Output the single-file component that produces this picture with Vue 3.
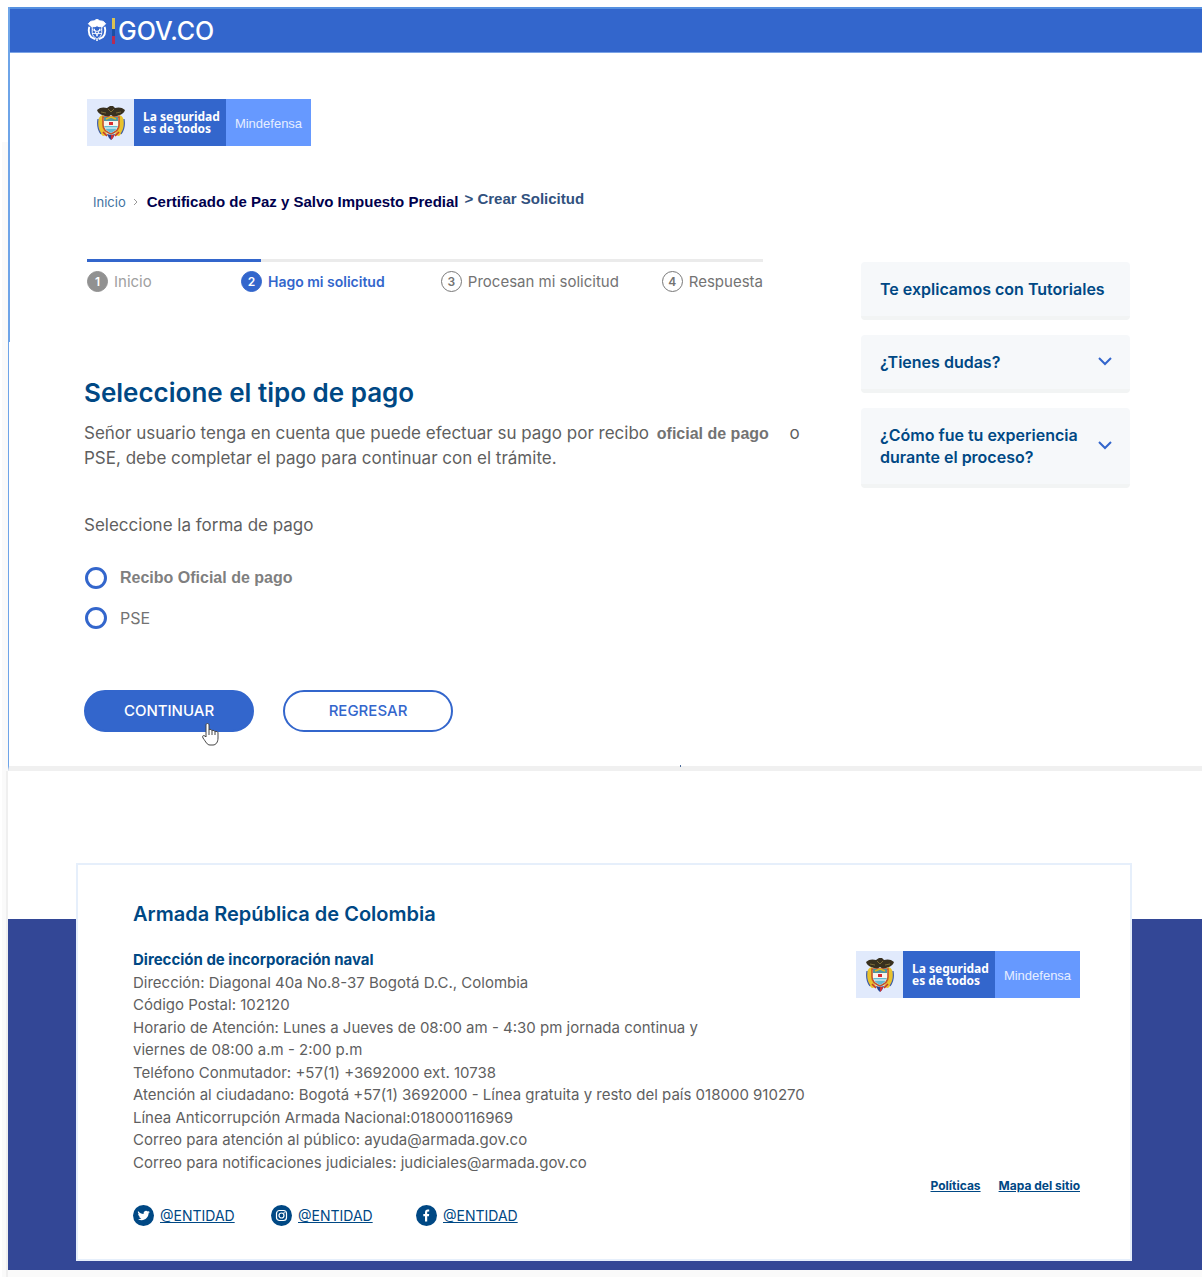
<script setup>
import { ref } from 'vue'

const payment = ref('')

const steps = [
  { label: 'Inicio', state: 'done' },
  { label: 'Hago mi solicitud', state: 'current' },
  { label: 'Procesan mi solicitud', state: 'next' },
  { label: 'Respuesta', state: 'next' },
]

const options = [
  { id: 'recibo', label: 'Recibo Oficial de pago', strong: true },
  { id: 'pse', label: 'PSE', strong: false },
]

const contact = [
  'Dirección: Diagonal 40a No.8-37 Bogotá D.C., Colombia',
  'Código Postal: 102120',
  'Horario de Atención: Lunes a Jueves de 08:00 am - 4:30 pm jornada continua y',
  'viernes de 08:00 a.m - 2:00 p.m',
  'Teléfono Conmutador: +57(1) +3692000 ext. 10738',
  'Atención al ciudadano: Bogotá +57(1) 3692000 - Línea gratuita y resto del país 018000 910270',
  'Línea Anticorrupción Armada Nacional:018000116969',
  'Correo para atención al público: ayuda@armada.gov.co',
  'Correo para notificaciones judiciales: judiciales@armada.gov.co',
]

const networks = ['twitter', 'instagram', 'facebook']
</script>

<template>
  <div class="page">
    <svg class="sprite" aria-hidden="true">
      <symbol id="arms" viewBox="0 0 30 34">
        <path d="M7 9C3 10 2 13 2 17c0 6 1 10 5 13l5-1C8 25 7 20 8 12z" fill="#e9c22c" />
        <path d="M23 9c4 1 5 4 5 8 0 6-1 10-5 13l-5-1c4-4 5-9 4-17z" fill="#e9c22c" />
        <path d="M2 13c-1 6 0 11 3 15M28 13c1 6 0 11-3 15" fill="none" stroke="#3f5da8" stroke-width="1.200" />
        <path d="M7 26l4 4M23 26l-4 4" stroke="#c8342c" stroke-width="1.600" />
        <path d="M1 4c3-3 7-3 10-2l3-2h3l2 2c3-1 7-1 10 2-1 3-3 4-5 5l-6 2-3-2-3 2-6-2C4 8 2 7 1 4z" fill="#38301f" />
        <path d="M5 6l5 1M25 6l-5 1M12 3l3 3 3-3" fill="none" stroke="#7c6b38" stroke-width="1" />
        <path d="M7 11h16v8c0 4-3 7-8 9-5-2-8-5-8-9z" fill="#f8f4ec" stroke="#c2542a" stroke-width="1.600" />
        <path d="M8 11h14v4H8z" fill="#4f97a0" />
        <path d="M10 13l5-2 5 2" fill="none" stroke="#e3b51c" stroke-width="1.600" />
        <path d="M13 16h4v3h-4z" fill="#d92d30" />
        <path d="M8 20h14c-1 3-3 5-7 7-4-2-6-4-7-7z" fill="#64bad2" />
        <path d="M9 22h12" stroke="#fff" stroke-width="1" />
        <path d="M11 28l4 1 4-1-2 4-2 2-2-2z" fill="#29428f" />
        <path d="M15 29l3 0-1 3-2 2z" fill="#cf3034" />
      </symbol>
      <symbol id="arms-line" viewBox="0 0 20 24">
        <g fill="none" stroke="#fff" stroke-linejoin="round">
          <path d="M1 5c2-3 4-3 6-3l3-2 3 2c2 0 4 0 6 3l-3 3-4 0-2-1-2 1-4 0z" fill="#fff" />
          <path d="M5 8v6c0 3 2 5 5 7 3-2 5-4 5-7V8" />
          <path d="M2 8c-1 4-1 8 2 11l4 2M18 8c1 4 1 8-2 11l-4 2" stroke-width="2" />
          <path d="M5 11l5 2 5-2M5 15h10M7 10l3 8 3-8M9 21l1 2 1-2" />
        </g>
      </symbol>
    </svg>

    <div class="screen">
      <header class="topbar">
        <a class="gov" href="#" aria-label="GOV.CO">
          <svg class="gov-arms"><use href="#arms-line" /></svg>
          <span class="flag"></span>
          <span class="gov-name">GOV.CO</span>
        </a>
      </header>

      <div class="body">
        <div class="entity">
          <span class="entity-arms"><svg><use href="#arms" /></svg></span>
          <strong class="entity-motto">La seguridad<br />es de todos</strong>
          <span class="entity-name">Mindefensa</span>
        </div>

        <nav class="crumbs" aria-label="Ruta">
          <a href="#">Inicio</a>
          <svg class="crumb-sep" viewBox="0 0 6 8"><path d="M1 1l3 3-3 3" /></svg>
          <span class="crumb-page">Certificado de Paz y Salvo Impuesto Predial</span>
          <span class="crumb-last">&gt; Crear Solicitud</span>
        </nav>

        <div class="columns">
          <main>
            <ol class="steps">
              <li v-for="(step, i) in steps" :key="step.label" :class="step.state">
                <span class="num">{{ i + 1 }}</span>{{ step.label }}
              </li>
            </ol>

            <h1>Seleccione el tipo de pago</h1>
            <p class="intro">
              Señor usuario tenga en cuenta que puede efectuar su pago por recibo
              <strong>oficial de pago</strong> o<br />
              PSE, debe completar el pago para continuar con el trámite.
            </p>

            <form @submit.prevent>
              <fieldset>
                <legend>Seleccione la forma de pago</legend>
                <label v-for="o in options" :key="o.id" :class="{ strong: o.strong }">
                  <input v-model="payment" type="radio" name="pago" :value="o.id" />
                  {{ o.label }}
                </label>
              </fieldset>
              <div class="actions">
                <button class="primary" type="submit">
                  CONTINUAR
                  <svg class="cursor" viewBox="0 0 18 23">
                    <path d="M5 2c0-2 3-2 3 0v5c0-1 3-1 3 1 0-1 3-1 3 1 0-1 3-1 3 1v5c0 4-2 7-5 7H9c-3 0-4-3-7-7-1-2 0-3 2-2l1 1z" />
                    <path d="M8 7v5M11 8v4M14 9v3" />
                  </svg>
                </button>
                <button class="secondary" type="button">REGRESAR</button>
              </div>
            </form>
          </main>

          <aside>
            <a class="help" href="#">Te explicamos con Tutoriales</a>
            <button class="help" type="button">
              ¿Tienes dudas?
              <svg viewBox="0 0 14 9"><path d="M1 1l6 6 6-6" /></svg>
            </button>
            <button class="help tall" type="button">
              <span>¿Cómo fue tu experiencia<br />durante el proceso?</span>
              <svg viewBox="0 0 14 9"><path d="M1 1l6 6 6-6" /></svg>
            </button>
          </aside>
        </div>
      </div>
    </div>

    <footer>
      <div class="card">
        <section class="contact">
          <h2>Armada República de Colombia</h2>
          <h3>Dirección de incorporación naval</h3>
          <p v-for="line in contact" :key="line">{{ line }}</p>
          <div class="networks">
            <a v-for="n in networks" :key="n" href="#" :aria-label="n">
              <svg viewBox="0 0 21 21">
                <circle cx="10.500" cy="10.500" r="10.500" fill="#004884" />
                <path
                  v-if="n === 'twitter'"
                  fill="#fff"
                  d="M5 6c1.500 2 3.500 3 5.600 3-.5-2.600 2.400-4.300 4.200-2.500l1.700-.6-1 1.500 1.500-.3-1.500 1.500c.1 4.500-5 8.500-10.500 5.700 1.300 0 2.500-.3 3.400-1-1.200-.1-2-.8-2.300-1.800h1.100C5.900 11 5.100 10 5.100 8.900l1 .3C5 8.300 4.700 7.200 5 6z"
                />
                <g v-else-if="n === 'instagram'" fill="none" stroke="#fff" stroke-width="1.200">
                  <rect x="5.500" y="5.500" width="10" height="10" rx="3" />
                  <circle cx="10.500" cy="10.500" r="2.500" />
                  <circle cx="13.400" cy="7.600" r=".2" />
                </g>
                <path
                  v-else
                  fill="#fff"
                  d="M9 16.500v-5.300H7.300V9H9V7.600c0-2 1-3 2.800-3h1.400v2h-1c-.8 0-1 .4-1 1V9h2l-.3 2.200h-1.700v5.300z"
                />
              </svg>
              <span>@ENTIDAD</span>
            </a>
          </div>
        </section>

        <section class="side">
          <div class="entity">
            <span class="entity-arms"><svg><use href="#arms" /></svg></span>
            <strong class="entity-motto">La seguridad<br />es de todos</strong>
            <span class="entity-name">Mindefensa</span>
          </div>
          <div class="legal">
            <a href="#">Políticas</a>
            <a href="#">Mapa del sitio</a>
          </div>
        </section>
      </div>
    </footer>
  </div>
</template>

<style>
body {
  margin: 0;
  background: #fff;
}
</style>

<style scoped>
* {
  box-sizing: border-box;
}

.page {
  padding: 7px 0 0 8px;
  background: linear-gradient(#fff 142px, #fafafa 142px) no-repeat 2px 0 / 6px 100%;
  color: #5f5f5f;
  font: 15px/1.5 Inter, "Noto Sans", sans-serif;
}

.sprite {
  position: absolute;
  width: 0;
  height: 0;
}

a {
  color: #004884;
}

h1,
h2,
h3,
p,
ol,
fieldset,
legend {
  margin: 0;
  padding: 0;
  border: 0;
}

/* Upper screen */
.screen {
  position: relative;
  border-bottom: 5px solid #f0f0f0;
  border-left: 1px solid #6ea4e8;
}

.screen::before {
  position: absolute;
  top: 0;
  left: 0;
  width: 1px;
  height: 335px;
  background: #6ea4e8;
  content: "";
}

.screen::after {
  position: absolute;
  bottom: -1px;
  left: 671px;
  width: 1px;
  height: 2px;
  background: #4a6a9a;
  content: "";
}

.topbar {
  display: flex;
  align-items: center;
  height: 46px;
  padding-left: 78px;
  border-top: 2px solid #5590e0;
  border-bottom: 1px solid #7ba3e6;
  background: #3366cc;
}

.gov {
  display: flex;
  align-items: center;
  color: #fff;
  text-decoration: none;
}

.gov-arms {
  width: 20px;
  height: 23px;
}

.flag {
  width: 3px;
  height: 26px;
  margin: 0 3px 0 5px;
  background: linear-gradient(#d9c252 42%, #1d4fa3 42% 70%, #b52c55 70%);
}

.gov-name {
  font-size: 25px;
  font-weight: 500;
  line-height: 24px;
}

.body {
  padding: 46px 72px 34px 75px;
}

.entity {
  display: flex;
  width: 224px;
  height: 47px;
  background: #6699ff;
  color: #fff;
}

.body > .entity {
  margin-left: 3px;
}

.entity-arms {
  display: flex;
  align-items: center;
  justify-content: center;
  width: 47px;
  background: #e1eafc;
}

.entity-arms svg {
  width: 30px;
  height: 34px;
}

.entity-motto {
  width: 92px;
  padding: 12px 0 0 9px;
  background: #3366cc;
  font: bold 12px/12px "Noto Sans", sans-serif;
  white-space: nowrap;
}

.entity-name {
  flex: 1;
  color: #e6eeff;
  font: 13px/49px "Liberation Sans", Arial, sans-serif;
  text-align: center;
}

.crumbs {
  display: flex;
  align-items: center;
  height: 24px;
  margin: 44px 0 0 9px;
  font: bold 15px/24px "Liberation Sans", Arial, sans-serif;
}

.crumbs a {
  color: #3f729f;
  font: 13px/24px Inter, sans-serif;
  text-decoration: none;
}

.crumb-sep {
  width: 6px;
  height: 8px;
  margin: 0 8px 0 7px;
  fill: none;
  stroke: #999;
}

.crumb-page {
  color: #00004d;
}

.crumb-last {
  align-self: flex-start;
  margin-left: 6px;
  color: #31517e;
  line-height: 18px;
}

.columns {
  display: grid;
  grid-template-columns: minmax(0, 1fr) 269px;
  gap: 59px;
  margin-top: 45px;
}

/* Progress */
.steps {
  display: grid;
  grid-template-columns: 154fr 200fr 221fr 101fr;
  margin: 0 39px 0 3px;
  padding-top: 9px;
  border-top: 3px solid #ebebeb;
  border-image: linear-gradient(90deg, #3366cc 26%, #ebebeb 26%) 3;
  list-style: none;
}

.steps li {
  display: flex;
  gap: 6px;
  align-items: center;
  color: #737373;
  font-size: 15px;
  line-height: 21px;
  white-space: nowrap;
}

.num {
  width: 21px;
  height: 21px;
  border: 1px solid #777;
  border-radius: 50%;
  font-size: 12px;
  font-weight: 600;
  line-height: 19px;
  text-align: center;
}

.steps .done {
  color: #a0a0a0;
}

.done .num {
  border-color: #919191;
  background: #919191;
  color: #fff;
}

.steps .current {
  color: #3366cc;
  font-size: 14px;
  font-weight: 600;
}

.current .num {
  border-color: #3366cc;
  background: #3366cc;
  color: #fff;
}

/* Payment form */
h1 {
  margin-top: 83px;
  color: #004884;
  font-size: 26px;
  font-weight: 600;
  line-height: 36px;
}

.intro {
  margin-top: 10px;
  font-size: 17px;
  line-height: 25px;
}

.intro strong {
  margin: 0 16px 0 3px;
  color: #737373;
  font-family: "Liberation Sans", Arial, sans-serif;
  font-size: 16px;
}

form {
  margin-top: 42px;
}

legend {
  margin-bottom: 20px;
  font-size: 17px;
  line-height: 25px;
}

label {
  display: flex;
  gap: 13px;
  align-items: center;
  height: 40px;
  color: #737373;
  font-size: 16px;
}

.strong {
  color: #7f7f7f;
  font-family: "Liberation Sans", Arial, sans-serif;
  font-weight: bold;
}

input {
  width: 22px;
  height: 22px;
  margin: 0 0 0 1px;
  border: 3px solid #3366cc;
  border-radius: 50%;
  appearance: none;
}

input:checked {
  background: radial-gradient(#3366cc 40%, #fff 45%);
}

.actions {
  display: flex;
  gap: 29px;
  margin-top: 52px;
}

.actions button {
  position: relative;
  width: 170px;
  height: 42px;
  border: 2px solid #3366cc;
  border-radius: 21px;
  background: #fff;
  color: #3366cc;
  font: 500 15px/20px Inter, sans-serif;
}

.actions .primary {
  background: #3366cc;
  color: #fff;
}

.cursor {
  position: absolute;
  top: 31px;
  left: 115px;
  width: 18px;
  height: 23px;
  fill: #fff;
  stroke: #444;
}

/* Help cards */
aside {
  display: flex;
  flex-direction: column;
  gap: 15px;
  align-items: stretch;
  padding-top: 3px;
}

.help {
  display: flex;
  align-items: center;
  justify-content: space-between;
  height: 58px;
  padding: 0 18px 1px 19px;
  border: 0;
  border-bottom: 4px solid #f2f4f4;
  border-radius: 4px;
  background: #f6f8fa;
  color: #004884;
  font: 600 16px/22px Inter, sans-serif;
  text-align: left;
  text-decoration: none;
}

.help.tall {
  height: 80px;
}

.help svg {
  width: 14px;
  height: 9px;
  fill: none;
  stroke: #3366cc;
  stroke-width: 2;
}

/* Footer */
footer {
  padding: 92px 70px 9px 68px;
  border-bottom: 7px solid #fafafa;
  background: linear-gradient(#fff 148px, #334796 148px);
  box-shadow: -2px 0 #efefef;
}

.card {
  display: flex;
  justify-content: space-between;
  padding: 35px 50px 33px 55px;
  border: 2px solid #e6effb;
  background: #fff;
}

h2 {
  margin-bottom: 21px;
  color: #004884;
  font-size: 20px;
  font-weight: 600;
  line-height: 28px;
}

h3 {
  color: #004884;
  font-size: 15px;
  font-weight: 700;
}

.contact p {
  white-space: nowrap;
}

.networks {
  display: grid;
  grid-template-columns: 138px 145px auto;
  margin-top: 31px;
}

.networks a {
  display: flex;
  gap: 6px;
  align-items: center;
  font-size: 14px;
  line-height: 21px;
}

.networks svg {
  width: 21px;
  height: 21px;
}

.side {
  display: flex;
  flex-direction: column;
  align-items: flex-end;
  justify-content: space-between;
  padding: 51px 0 31px;
}

.legal {
  display: flex;
  gap: 18px;
  font-size: 12px;
  font-weight: 700;
  line-height: 18px;
  white-space: nowrap;
}
</style>
